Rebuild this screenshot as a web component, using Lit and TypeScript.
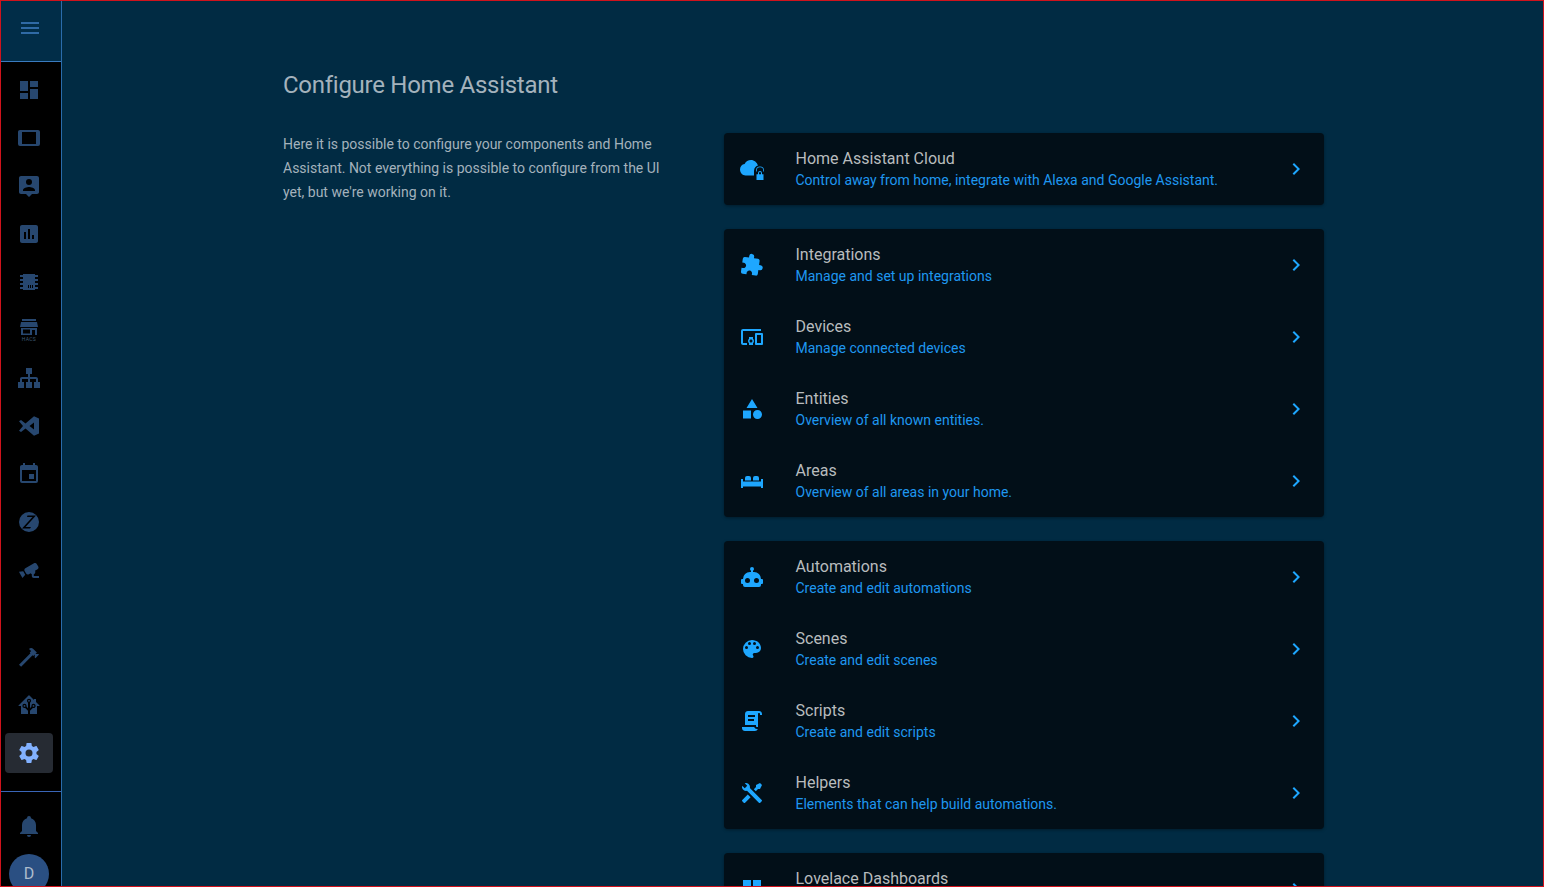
import { LitElement, html, css, svg } from "lit";
import { customElement } from "lit/decorators.js";

const icons: Record<string, string> = {
  menu: "M3,6H21V8H3V6M3,11H21V13H3V11M3,16H21V18H3V16Z",
  dashboard: "M13,3V9H21V3M13,21H21V11H13M3,21H11V15H3M3,13H11V3H3V13Z",
  tablet:
    "M19,18H5V6H19M21,4H3C1.89,4 1,4.89 1,6V18A2,2 0 0,0 3,20H21A2,2 0 0,0 23,18V6C23,4.89 22.1,4 21,4Z",
  tooltip:
    "M12 23L9 20H4C2.89 20 2 19.1 2 18V4C2 2.89 2.9 2 4 2H20C21.1 2 22 2.9 22 4V18C22 19.1 21.1 20 20 20H15L12 23M12 5A3 3 0 0 0 9 8 3 3 0 0 0 12 11 3 3 0 0 0 15 8 3 3 0 0 0 12 5M18 17V16C18 14 14 12.9 12 12.9S6 14 6 16V17H18Z",
  chart:
    "M19 3H5C3.9 3 3 3.9 3 5V19C3 20.1 3.9 21 5 21H19C20.1 21 21 20.1 21 19V5C21 3.9 20.1 3 19 3M9 17H7V10H9V17M13 17H11V7H13V17M17 17H15V13H17V17Z",
  chip: "M6,4H18V5H21V7H18V9H21V11H18V13H21V15H18V17H21V19H18V20H6V19H3V17H6V15H3V13H6V11H3V9H6V7H3V5H6V4M11,15V18H12V15H11M13,15V18H14V15H13M15,15V18H16V15H15Z",
  hacs: "M5,1H19V3H5V1M4,4H20L21,9H3L4,4M4,10H20V17H4V10M6,11.5V15.5H13V11.5H6M15,12V17H18V12H15Z",
  sitemap:
    "M9,2V8H11V11H5C3.89,11 3,11.89 3,13V16H1V22H7V16H5V13H11V16H9V22H15V16H13V13H19V16H17V22H23V16H21V13C21,11.89 20.11,11 19,11H13V8H15V2H9Z",
  vscode:
    "M17 2.2L22 4.5V19.5L17 21.8L8.5 14.5L4 18L2 16.8L6 12L2 7.2L4 6L8.5 9.5L17 2.2M17 8.5L12.5 12L17 15.5V8.5Z",
  calendar:
    "M19,3H18V1H16V3H8V1H6V3H5C3.89,3 3,3.89 3,5V19A2,2 0 0,0 5,21H19A2,2 0 0,0 21,19V5C21,3.89 20.1,3 19,3M19,19H5V8H19V19M12,12H17V17H12V12Z",
  zwave:
    "M12 2A10 10 0 1 0 12 22A10 10 0 1 0 12 2M10.5 5.5H19L8.5 17H14L13 18.5H5L15.5 7H10L10.5 5.5Z",
  cctv: "M18.15,4.94C17.77,4.91 17.37,5 17,5.2L8.35,10.2C7.39,10.76 7.06,12 7.62,12.94L9.12,15.53C9.67,16.5 10.89,16.82 11.85,16.27L13.65,15.23C13.92,15.69 14.32,16.06 14.81,16.27V18.04C14.81,19.13 15.7,20 16.81,20H22V18.04H16.81V16.27C17.72,15.87 18.31,14.97 18.31,14C18.31,13.54 18.19,13.11 17.97,12.73L20.5,11.27C21.47,10.71 21.8,9.5 21.24,8.53L19.74,5.94C19.4,5.34 18.79,5 18.15,4.94M6.22,13.17L2,13.87L2.75,15.17L4.75,18.63L5.5,19.93L8.22,16.63L6.22,13.17Z",
  hammer:
    "M2 19.63L13.43 8.2L12.72 7.5L14.14 6.07L12 3.89C13.2 2.7 15.09 2.7 16.27 3.89L19.87 7.5L18.45 8.91H21.29L22 9.62L18.45 13.21L17.74 12.5V9.62L16.27 11.04L15.56 10.33L4.13 21.76L2 19.63Z",
  ha: "M21.8,13H20V21H13V17.67L15.79,14.88L16.5,15C17.66,15 18.6,14.06 18.6,12.9C18.6,11.74 17.66,10.8 16.5,10.8A2.1,2.1 0 0,0 14.4,12.9L14.5,13.61L13,15.13V9.65C13.66,9.29 14.1,8.6 14.1,7.8A2.1,2.1 0 0,0 12,5.7A2.1,2.1 0 0,0 9.9,7.8C9.9,8.6 10.34,9.29 11,9.65V15.13L9.5,13.61L9.6,12.9A2.1,2.1 0 0,0 7.5,10.8A2.1,2.1 0 0,0 5.4,12.9A2.1,2.1 0 0,0 7.5,15L8.21,14.88L11,17.67V21H4V13H2.25C1.83,13 1.42,13 1.42,12.79C1.43,12.57 1.85,12.15 2.28,11.72L11,3C11.33,2.67 11.67,2.33 12,2.33C12.33,2.33 12.67,2.67 13,3L17,7V6H19V9L21.78,11.78C22.18,12.18 22.59,12.59 22.6,12.8C22.6,13 22.2,13 21.8,13M7.5,12A0.9,0.9 0 0,1 8.4,12.9A0.9,0.9 0 0,1 7.5,13.8A0.9,0.9 0 0,1 6.6,12.9A0.9,0.9 0 0,1 7.5,12M16.5,12C17,12 17.4,12.4 17.4,12.9C17.4,13.4 17,13.8 16.5,13.8A0.9,0.9 0 0,1 15.6,12.9A0.9,0.9 0 0,1 16.5,12M12,6.9C12.5,6.9 12.9,7.3 12.9,7.8C12.9,8.3 12.5,8.7 12,8.7C11.5,8.7 11.1,8.3 11.1,7.8C11.1,7.3 11.5,6.9 12,6.9Z",
  cog: "M12,15.5A3.5,3.5 0 0,1 8.5,12A3.5,3.5 0 0,1 12,8.5A3.5,3.5 0 0,1 15.5,12A3.5,3.5 0 0,1 12,15.5M19.43,12.97C19.47,12.65 19.5,12.33 19.5,12C19.5,11.67 19.47,11.34 19.43,11L21.54,9.37C21.73,9.22 21.78,8.95 21.66,8.73L19.66,5.27C19.54,5.05 19.27,4.96 19.05,5.05L16.56,6.05C16.04,5.66 15.5,5.32 14.87,5.07L14.5,2.42C14.46,2.18 14.25,2 14,2H10C9.75,2 9.54,2.18 9.5,2.42L9.13,5.07C8.5,5.32 7.96,5.66 7.44,6.05L4.95,5.05C4.73,4.96 4.46,5.05 4.34,5.27L2.34,8.73C2.21,8.95 2.27,9.22 2.46,9.37L4.57,11C4.53,11.34 4.5,11.67 4.5,12C4.5,12.33 4.53,12.65 4.57,12.97L2.46,14.63C2.27,14.78 2.21,15.05 2.34,15.27L4.34,18.73C4.46,18.95 4.73,19.03 4.95,18.95L7.44,17.94C7.96,18.34 8.5,18.68 9.13,18.93L9.5,21.58C9.54,21.82 9.75,22 10,22H14C14.25,22 14.46,21.82 14.5,21.58L14.87,18.93C15.5,18.67 16.04,18.34 16.56,17.94L19.05,18.95C19.27,19.03 19.54,18.95 19.66,18.73L21.66,15.27C21.78,15.05 21.73,14.78 21.54,14.63L19.43,12.97Z",
  bell: "M21,19V20H3V19L5,17V11C5,7.9 7.03,5.17 10,4.29C10,4.19 10,4.1 10,4A2,2 0 0,1 12,2A2,2 0 0,1 14,4C14,4.1 14,4.19 14,4.29C16.97,5.17 19,7.9 19,11V17L21,19M14,21A2,2 0 0,1 12,23A2,2 0 0,1 10,21",
  cloudlock:
    "M11,3C8.2,3 5.8,4.6 4.6,7C2,7.3 0,9.6 0,12.5C0,15.5 2.5,18.5 5.5,18.5H14V14C14,11 16,9 18,8.6C17,5.4 14.2,3 11,3M16,13.5A4,4 0 0,1 24,13.5V14.5H23.2V13.5A3.2,3.2 0 0,0 16.8,13.5V14.5H16V13.5M18,17.2V16A2,2 0 0,1 22,16V17.2H23.5V23H16.5V17.2H18M19,17.2H21V16A1,1 0 0,0 19,16V17.2Z",
  puzzle:
    "M20.5,11H19V7C19,5.89 18.1,5 17,5H13V3.5A2.5,2.5 0 0,0 10.5,1A2.5,2.5 0 0,0 8,3.5V5H4A2,2 0 0,0 2,7V10.8H3.5C5,10.8 6.2,12 6.2,13.5C6.2,15 5,16.2 3.5,16.2H2V20A2,2 0 0,0 4,22H7.8V20.5C7.8,19 9,17.8 10.5,17.8C12,17.8 13.2,19 13.2,20.5V22H17A2,2 0 0,0 19,20V16H20.5A2.5,2.5 0 0,0 23,13.5A2.5,2.5 0 0,0 20.5,11Z",
  devices:
    "M3 6H21V4H3C1.9 4 1 4.9 1 6V18C1 19.1 1.9 20 3 20H7V18H3V6M13 12H9V13.78C8.39 14.33 8 15.11 8 16C8 16.89 8.39 17.67 9 18.22V20H13V18.22C13.61 17.67 14 16.88 14 16S13.61 14.33 13 13.78V12M11 17.5C10.17 17.5 9.5 16.83 9.5 16S10.17 14.5 11 14.5 12.5 15.17 12.5 16 11.83 17.5 11 17.5M22 8H16C15.5 8 15 8.5 15 9V19C15 19.5 15.5 20 16 20H22C22.5 20 23 19.5 23 19V9C23 8.5 22.5 8 22 8M21 18H17V10H21V18Z",
  shape:
    "M11,13.5V21.5H3V13.5H11M12,2L17.5,11H6.5L12,2M17.5,13C20,13 22,15 22,17.5C22,20 20,22 17.5,22C15,22 13,20 13,17.5C13,15 15,13 17.5,13Z",
  sofa: "M7,7A2,2 0 0,0 5,9V11.5H11V9A2,2 0 0,0 9,7H7M15,7A2,2 0 0,0 13,9V11.5H19V9A2,2 0 0,0 17,7H15M1,10H3V12.5H21V10H23V19H21V17.5H3V19H1V10Z",
  robot:
    "M12,2A2,2 0 0,1 14,4C14,4.74 13.6,5.39 13,5.73V7H14A7,7 0 0,1 21,14H22A1,1 0 0,1 23,15V18A1,1 0 0,1 22,19H21V20A2,2 0 0,1 19,22H5A2,2 0 0,1 3,20V19H2A1,1 0 0,1 1,18V15A1,1 0 0,1 2,14H3A7,7 0 0,1 10,7H11V5.73C10.4,5.39 10,4.74 10,4A2,2 0 0,1 12,2M7.5,13A2.5,2.5 0 0,0 5,15.5A2.5,2.5 0 0,0 7.5,18A2.5,2.5 0 0,0 10,15.5A2.5,2.5 0 0,0 7.5,13M16.5,13A2.5,2.5 0 0,0 14,15.5A2.5,2.5 0 0,0 16.5,18A2.5,2.5 0 0,0 19,15.5A2.5,2.5 0 0,0 16.5,13Z",
  palette:
    "M17.5,12A1.5,1.5 0 0,1 16,10.5A1.5,1.5 0 0,1 17.5,9A1.5,1.5 0 0,1 19,10.5A1.5,1.5 0 0,1 17.5,12M14.5,8A1.5,1.5 0 0,1 13,6.5A1.5,1.5 0 0,1 14.5,5A1.5,1.5 0 0,1 16,6.5A1.5,1.5 0 0,1 14.5,8M9.5,8A1.5,1.5 0 0,1 8,6.5A1.5,1.5 0 0,1 9.5,5A1.5,1.5 0 0,1 11,6.5A1.5,1.5 0 0,1 9.5,8M6.5,12A1.5,1.5 0 0,1 5,10.5A1.5,1.5 0 0,1 6.5,9A1.5,1.5 0 0,1 8,10.5A1.5,1.5 0 0,1 6.5,12M12,3A9,9 0 0,0 3,12A9,9 0 0,0 12,21A1.5,1.5 0 0,0 13.5,19.5C13.5,19.11 13.35,18.76 13.11,18.5C12.88,18.23 12.73,17.88 12.73,17.5A1.5,1.5 0 0,1 14.23,16H16A5,5 0 0,0 21,11C21,6.58 16.97,3 12,3Z",
  script:
    "M17.8,20C17.4,21.2 16.3,22 15,22H5C3.3,22 2,20.7 2,19V18H5L14.2,18C14.6,19.2 15.7,20 17,20H17.8M19,2C20.7,2 22,3.3 22,5V6H20V5C20,4.4 19.6,4 19,4C18.4,4 18,4.4 18,5V18H17C16.4,18 16,17.6 16,17V16H5V5C5,3.3 6.3,2 8,2H19M8,6V8H15V6H8M8,10V12H14V10H8Z",
  tools:
    "M21.71 20.29L20.29 21.71A1 1 0 0 1 18.88 21.71L7 9.85A3.81 3.81 0 0 1 6 10A4 4 0 0 1 2.22 4.7L4.76 7.24L5.29 6.71L6.71 5.29L7.24 4.76L4.7 2.22A4 4 0 0 1 10 6A3.81 3.81 0 0 1 9.85 7L21.71 18.88A1 1 0 0 1 21.71 20.29M2.29 18.88A1 1 0 0 0 2.29 20.29L3.71 21.71A1 1 0 0 0 5.12 21.71L10.59 16.25L7.76 13.42M20 2L16 4V6L13.83 8.17L15.83 10.17L18 8H20L22 4Z",
  chevron: "M8.59,16.58L13.17,12L8.59,7.41L10,6L16,12L10,18L8.59,16.58Z",
};

const topNav = ["dashboard", "tablet", "tooltip", "chart", "chip", "hacs", "sitemap", "vscode", "calendar", "zwave", "cctv"];

const groups = [
  [{ icon: "cloudlock", name: "Home Assistant Cloud", desc: "Control away from home, integrate with Alexa and Google Assistant." }],
  [
    { icon: "puzzle", name: "Integrations", desc: "Manage and set up integrations" },
    { icon: "devices", name: "Devices", desc: "Manage connected devices" },
    { icon: "shape", name: "Entities", desc: "Overview of all known entities." },
    { icon: "sofa", name: "Areas", desc: "Overview of all areas in your home." },
  ],
  [
    { icon: "robot", name: "Automations", desc: "Create and edit automations" },
    { icon: "palette", name: "Scenes", desc: "Create and edit scenes" },
    { icon: "script", name: "Scripts", desc: "Create and edit scripts" },
    { icon: "tools", name: "Helpers", desc: "Elements that can help build automations." },
  ],
  [{ icon: "dashboard", name: "Lovelace Dashboards", desc: "Create customized sets of cards" }],
];

// the puzzle piece sits slightly turned in the reference
const turned: Record<string, string> = { puzzle: "rotate(8 12 12)" };

function icon(name: string) {
  return html`<svg class="icon" viewBox="0 0 24 24" fill-rule="evenodd">
    ${svg`<path d=${icons[name]} transform=${turned[name] ?? ""}></path>`}
    ${name === "hacs" ? svg`<text class="hacs" x="12" y="22.5" text-anchor="middle">HACS</text>` : ""}
  </svg>`;
}

@customElement("app-root")
export class AppRoot extends LitElement {
  static styles = css`
    :host {
      display: block;
      height: 887px;
      position: relative;
      overflow: hidden;
      font-family: Roboto, "Liberation Sans", sans-serif;
      background: #012b43;
    }
    .frame {
      position: absolute;
      inset: 0;
      border: 1px solid #d0131c;
      pointer-events: none;
    }
    .shell {
      display: flex;
      height: 887px;
    }
    .icon {
      display: block;
      width: 24px;
      height: 24px;
      fill: currentColor;
    }
    .hacs {
      font-size: 5px;
      letter-spacing: 0.3px;
      fill: #3f5a75;
    }
    .sidebar {
      flex: none;
      box-sizing: border-box;
      width: 62px;
      height: 887px;
      overflow: hidden;
      background: #000;
      border-right: 1px solid #2a6cab;
      color: #27476f;
    }
    .menu {
      box-sizing: border-box;
      height: 62px;
      display: flex;
      align-items: center;
      justify-content: center;
      background: #012d48;
      border-bottom: 1px solid #3a7bbf;
      color: #2f6aa5;
      padding: 0 3px 5px 1px;
    }
    .nav {
      padding: 8px 5px 0 5px;
    }
    .item {
      width: 48px;
      height: 40px;
      margin-bottom: 8px;
      display: flex;
      align-items: center;
      justify-content: center;
      border-radius: 4px;
    }
    .item.active {
      background: #262b33;
      color: #82b1ff;
    }
    .spacer {
      height: 31px;
    }
    .tools {
      border-bottom: 1px solid #3a66b8;
      padding-bottom: 10px;
    }
    .alerts {
      padding: 14px 5px 0 5px;
    }
    .avatar {
      width: 40px;
      height: 40px;
      margin-left: 9px;
      border-radius: 50%;
      background: #2a4f82;
      color: #aebccd;
      font-size: 16px;
      line-height: 40px;
      text-align: center;
    }
    main {
      flex: 1;
      min-width: 0;
      padding-left: 221px;
    }
    .section {
      width: 1041px;
      padding-top: 69px;
    }
    h1 {
      margin: 0;
      font-size: 24px;
      font-weight: 400;
      line-height: 32px;
      letter-spacing: -0.27px;
      color: #a4b2bc;
    }
    .columns {
      display: flex;
      margin-top: 32px;
    }
    .intro {
      flex: none;
      box-sizing: border-box;
      width: 441px;
      padding-right: 41px;
      margin: -1px 0 0 0;
      font-size: 14px;
      line-height: 24px;
      color: #a4b2bc;
    }
    .cards {
      flex: none;
      width: 600px;
      display: flex;
      flex-direction: column;
      gap: 24px;
    }
    .card {
      background: #020f18;
      border-radius: 4px;
      box-shadow: 0 1px 3px rgba(0, 0, 0, 0.35);
    }
    .row {
      height: 72px;
      box-sizing: border-box;
      padding: 0 16px;
      display: flex;
      align-items: center;
    }
    .row-icon {
      flex: none;
      width: 56px;
      color: #1ea7ff;
    }
    .text {
      flex: 1;
      min-width: 0;
      margin-left: -0.5px;
    }
    .name {
      font-size: 16px;
      line-height: 23px;
      color: #b8bcbe;
    }
    .desc {
      font-size: 14px;
      line-height: 21px;
      color: #1f97f0;
    }
    .chevron {
      flex: none;
      color: #1ea7ff;
    }
  `;

  render() {
    return html`
      <div class="shell">
        <aside class="sidebar">
          <div class="menu">${icon("menu")}</div>
          <div class="nav">
            ${topNav.map((n) => html`<div class="item">${icon(n)}</div>`)}
            <div class="spacer"></div>
          </div>
          <div class="nav tools">
            <div class="item">${icon("hammer")}</div>
            <div class="item">${icon("ha")}</div>
            <div class="item active">${icon("cog")}</div>
          </div>
          <div class="alerts"><div class="item">${icon("bell")}</div></div>
          <div class="avatar">D</div>
        </aside>
        <main>
          <div class="section">
            <h1>Configure Home Assistant</h1>
            <div class="columns">
              <p class="intro">
                Here it is possible to configure your components and Home
                Assistant. Not everything is possible to configure from the UI
                yet, but we're working on it.
              </p>
              <div class="cards">
                ${groups.map(
                  (g) => html`<div class="card">
                    ${g.map(
                      (r) => html`<div class="row">
                        <div class="row-icon">${icon(r.icon)}</div>
                        <div class="text">
                          <div class="name">${r.name}</div>
                          <div class="desc">${r.desc}</div>
                        </div>
                        <div class="chevron">${icon("chevron")}</div>
                      </div>`
                    )}
                  </div>`
                )}
              </div>
            </div>
          </div>
        </main>
      </div>
      <div class="frame"></div>
    `;
  }
}
